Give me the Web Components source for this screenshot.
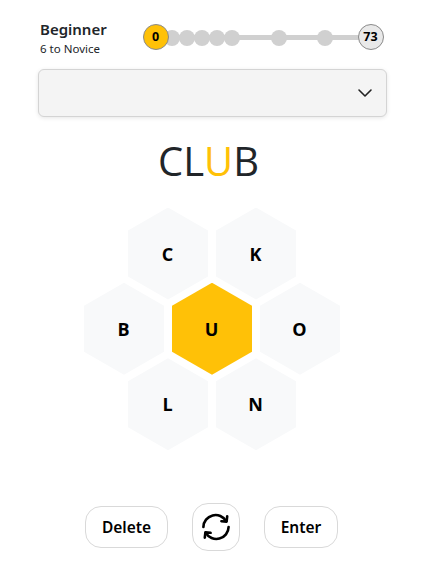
<!DOCTYPE html>
<html lang="en">
<head>
<meta charset="utf-8">
<title>Spelling Bee</title>
<style>
  html, body { margin: 0; background: #fff; }
  body { font-family: "Noto Sans", "Open Sans", sans-serif; color: #000; }
</style>
</head>
<body>
<bee-game>
  <bee-rank label="Beginner" hint="6 to Novice" score="0" max="73"></bee-rank>
  <bee-found></bee-found>
  <bee-word>CL<b>U</b>B</bee-word>
  <bee-hive>
    <bee-row><bee-cell>C</bee-cell><bee-cell>K</bee-cell></bee-row>
    <bee-row><bee-cell>B</bee-cell><bee-cell center>U</bee-cell><bee-cell>O</bee-cell></bee-row>
    <bee-row><bee-cell>L</bee-cell><bee-cell>N</bee-cell></bee-row>
  </bee-hive>
  <bee-actions>
    <bee-button style="--w:83px">Delete</bee-button>
    <bee-button icon style="--w:48px;--h:48px">
      <svg width="30" height="28" viewBox="0 0 30 28" fill="none" stroke="#000" stroke-width="2.6" stroke-linecap="round" stroke-linejoin="round" aria-label="Shuffle">
        <path d="M2.4 14A12.2 12.2 0 0 1 25.2 8.2"/>
        <path d="M26.2 3.4 25.6 8.6 20.4 8.2"/>
        <path d="M27.6 14A12.2 12.2 0 0 1 4.8 19.8"/>
        <path d="M3.8 24.6 4.4 19.4 9.6 19.8"/>
      </svg>
    </bee-button>
    <bee-button style="--w:74px">Enter</bee-button>
  </bee-actions>
</bee-game>

<script>
// Small helper: every element gets an open shadow root from a css + markup pair.
function defineElement(tag, css, markup, setup) {
  customElements.define(tag, class extends HTMLElement {
    constructor() {
      super();
      this.attachShadow({ mode: 'open' });
      this.shadowRoot.innerHTML = `<style>${css}</style>${markup}`;
    }
    connectedCallback() { setup?.(this); }
  });
}

defineElement('bee-game', `
  :host { display: block; width: 426px; height: 564px; overflow: hidden; box-sizing: border-box; padding: 19px 39.5px 0 37.5px; }
`, `<slot></slot>`);

// Stops on the rank track, given as px along the 215px line between the two end badges.
const RANK_STOPS = [16, 31, 46, 61, 76.5, 123, 169];

defineElement('bee-rank', `
  :host { display: flex; align-items: flex-start; height: 50px; color: #212529; }
  .text { width: 118px; padding-left: 2.5px; box-sizing: border-box; flex: none; }
  .label { font-size: 15px; font-weight: 600; line-height: 21px; }
  .hint { font-size: 11.5px; line-height: 16px; margin-top: 1px; }
  .track { position: relative; flex: none; width: 215px; height: 5px; margin: 16px 0 0 0; background: #d0d0d0; }
  .stop { position: absolute; top: -5.5px; width: 16px; height: 16px; margin-left: -8px; border-radius: 50%; background: #d0d0d0; }
  .badge { position: absolute; top: -11.5px; width: 26px; height: 26px; box-sizing: border-box; margin-left: -13px; border-radius: 50%;
    border: 1px solid #8a8a8a; display: flex; align-items: center; justify-content: center; font-size: 12.5px; font-weight: 700; color: #000; }
  .low { left: 0; background: #ffc107; }
  .high { left: 100%; background: #e9e9e9; }
`, `
  <div class="text"><div class="label"></div><div class="hint"></div></div>
  <div class="track"></div>
`, (el) => {
  const root = el.shadowRoot;
  root.querySelector('.label').textContent = el.getAttribute('label');
  root.querySelector('.hint').textContent = el.getAttribute('hint');
  const track = root.querySelector('.track');
  track.innerHTML = RANK_STOPS.map((x) => `<span class="stop" style="left:${x}px"></span>`).join('') +
      `<span class="badge low">${el.getAttribute('score')}</span><span class="badge high">${el.getAttribute('max')}</span>`;
});

defineElement('bee-found', `
  :host { display: flex; align-items: center; justify-content: flex-end; box-sizing: border-box; width: 349px; height: 48px; padding-right: 13px;
    background: #f4f4f4; border: 1px solid #d4d4d4; border-radius: 6px; box-shadow: 0 1px 4px rgba(0,0,0,.1); }
  svg { display: block; }
`, `
  <svg width="16" height="10" viewBox="0 0 16 10" fill="none" stroke="#222" stroke-width="1.6" stroke-linecap="round" stroke-linejoin="round"><path d="M2 2l6 6 6-6"/></svg>
`);

defineElement('bee-word', `
  :host { display: block; width: 342px; margin-top: 17px; text-align: center; font-family: "Open Sans", "Noto Sans", sans-serif; font-size: 40px; font-weight: 400; line-height: 54px; color: #212529; }
  ::slotted(b) { font-weight: 400; color: #ffc107; }
`, `<slot></slot>`);

defineElement('bee-hive', `
  :host { display: flex; flex-direction: column; width: 349px; margin-top: 19.5px; }
`, `<slot></slot>`);

defineElement('bee-row', `
  :host { display: flex; justify-content: center; gap: 8px; height: 92px; margin-bottom: -16.7px; }
`, `<slot></slot>`);

defineElement('bee-cell', `
  :host { display: flex; align-items: center; justify-content: center; width: 80px; height: 92px; font-family: "Open Sans", "Noto Sans", sans-serif; font-size: 18px; font-weight: 700; color: #000;
    background: #f8f9fa; clip-path: polygon(50% 0, 100% 25%, 100% 75%, 50% 100%, 0 75%, 0 25%); padding-right: 1px; box-sizing: border-box; }
  :host([center]) { background: #ffc107; }
`, `<slot></slot>`);

defineElement('bee-actions', `
  :host { display: flex; align-items: center; gap: 24px; width: 349px; margin-top: 69.5px; padding-left: 47.5px; box-sizing: border-box; }
`, `<slot></slot>`);

defineElement('bee-button', `
  :host { display: flex; align-items: center; justify-content: center; box-sizing: border-box; width: var(--w); height: var(--h, 42px);
    border: 1px solid #d9d9d9; border-radius: 16px; background: #fff; font-size: 15.5px; font-weight: 600; color: #000; flex: none; }
`, `<slot></slot>`);
</script>
</body>
</html>
